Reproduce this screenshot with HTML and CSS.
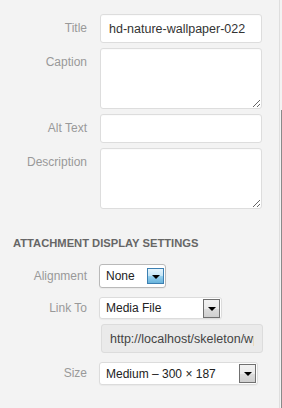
FILE: index.html
```html
<!DOCTYPE html>
<html>
<head>
<meta charset="utf-8">
<link rel="stylesheet" href="styles.css">
</head>
<body>
<div class="frame">
  <div class="panel">
    <div class="settings">
      <div class="row">
        <span class="label lh29">Title</span>
        <input class="field" type="text" value="hd-nature-wallpaper-022">
      </div>
      <div class="row">
        <span class="label lh29">Caption</span>
        <textarea class="field area"></textarea>
      </div>
      <div class="row">
        <span class="label lh29">Alt Text</span>
        <input class="field" type="text" value="">
      </div>
      <div class="row">
        <span class="label lh29">Description</span>
        <textarea class="field area"></textarea>
      </div>
    </div>
    <h3 class="heading">Attachment Display Settings</h3>
    <div class="display">
      <div class="row">
        <span class="label lh24">Alignment</span>
        <div class="select sel-align">
          <span class="sel-text">None</span>
          <span class="arrow arrow-active"><span class="tri"></span></span>
        </div>
      </div>
      <div class="row row-link">
        <span class="label lh22">Link To</span>
        <div class="select sel-link">
          <span class="sel-text">Media File</span>
          <span class="arrow"><span class="tri"></span></span>
        </div>
      </div>
      <div class="row row-url">
        <span class="label"></span>
        <input class="url" type="text" readonly value="http://localhost/skeleton/wp-content/uploads/2013/hd-nature-wallpaper-022.jpg">
      </div>
      <div class="row row-size">
        <span class="label lh23">Size</span>
        <div class="select sel-size">
          <span class="sel-text">Medium – 300 × 187</span>
          <span class="arrow"><span class="tri"></span></span>
        </div>
      </div>
    </div>
  </div>
  <div class="scroll"><div class="thumb"></div></div>
</div>
</body>
</html>
```
FILE: styles.css
```css
* { box-sizing: border-box; }
html, body {
  margin: 0;
  padding: 0;
  background: #f3f3f3;
}
body {
  font-family: "Liberation Sans", Arial, sans-serif;
  color: #333;
}
.frame {
  display: flex;
  width: 282px;
  height: 408px;
  overflow: hidden;
}
.panel {
  width: 280px;
  flex: none;
  border-right: 1px solid #dedede;
  padding-top: 14px;
}
.scroll {
  width: 2px;
  flex: none;
}
.thumb {
  margin-top: 110px;
  height: 298px;
  border-right: 1px solid #8a8a8a;
}
.settings {
  display: flex;
  flex-direction: column;
  gap: 5px;
}
.row {
  display: grid;
  grid-template-columns: 87px auto;
  column-gap: 12px;
  align-items: start;
  justify-items: start;
}
.label {
  justify-self: end;
  font-size: 12px;
  color: #999;
  white-space: nowrap;
}
.lh29 { line-height: 29px; }
.lh24 { line-height: 24px; }
.lh22 { line-height: 22px; }
.lh23 { line-height: 23px; }
.field {
  margin: 0 0 0 1px;
  width: 162px;
  height: 29px;
  border: 1px solid #dddddd;
  border-radius: 3px;
  background: #fff;
  padding: 0 8px;
  font-family: "Liberation Sans", Arial, sans-serif;
  font-size: 12.5px;
  color: #333;
  outline: none;
  box-shadow: inset 0 1px 1px rgba(0,0,0,0.02);
}
.area {
  height: 61px;
  resize: vertical;
  display: block;
}
.heading {
  margin: 27px 0 14px 13px;
  font-size: 11.2px;
  line-height: 14px;
  font-weight: bold;
  text-transform: uppercase;
  color: #666;
}
.display {
  display: flex;
  flex-direction: column;
}
.row-link { margin-top: 9px; }
.row-url { margin-top: 5px; }
.row-size { margin-top: 9px; }
.select {
  display: flex;
  align-items: center;
  justify-content: space-between;
  background: #fff;
  border: 1px solid #dcdcdc;
  border-radius: 3px;
  padding: 0 1px 0 6px;
  font-size: 12px;
  color: #222;
  box-shadow: 0 1px 1px rgba(0,0,0,0.04);
}
.sel-align {
  width: 67px;
  height: 24px;
  border-color: #b9b9b9;
  padding-right: 1px;
}
.sel-link {
  width: 123px;
  height: 22px;
}
.sel-size {
  width: 159px;
  height: 23px;
}
.sel-text { white-space: nowrap; }
.arrow {
  width: 17px;
  height: 19px;
  border: 1px solid #707070;
  background: linear-gradient(#f2f2f2 0%, #ebebeb 50%, #dddddd 51%, #cfcfcf 100%);
  display: flex;
  align-items: center;
  justify-content: center;
}
.sel-align .arrow {
  height: 16px;
}
.arrow-active {
  border-color: #3c7fb1;
  background: linear-gradient(#e5f4fc 0%, #c4e5f6 50%, #98d1ef 51%, #68b3db 100%);
}
.tri {
  width: 0;
  height: 0;
  border-left: 4px solid transparent;
  border-right: 4px solid transparent;
  border-top: 4px solid #000;
  margin-top: 1px;
}
.url {
  margin: 0 0 0 2px;
  width: 162px;
  height: 29px;
  background: #eaeaea;
  border: 1px solid #dcdcdc;
  border-radius: 3px;
  padding: 0 8px;
  font-family: "Liberation Sans", Arial, sans-serif;
  font-size: 12.5px;
  color: #444;
  outline: none;
}
```
